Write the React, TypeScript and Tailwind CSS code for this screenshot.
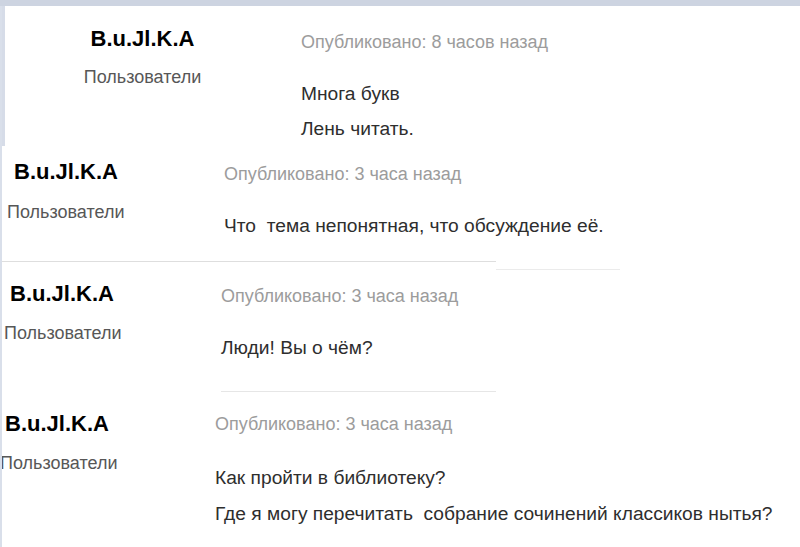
const font = { fontFamily: '"Liberation Sans", Arial, sans-serif' };

const Name = ({ className = "" }: { className?: string }) => (
  <div className={`text-[22px] leading-[24px] font-bold text-black whitespace-nowrap ${className}`}>B.u.Jl.K.A</div>
);

const Role = ({ className = "" }: { className?: string }) => (
  <div className={`text-[18px] leading-[24px] text-[#575757] whitespace-nowrap ${className}`}>Пользователи</div>
);

const Meta = ({ when, className = "" }: { when: string; className?: string }) => (
  <div className={`text-[18px] leading-[24px] text-[#9c9c9c] whitespace-nowrap ${className}`}>
    Опубликовано: {when}
  </div>
);

const Body = ({ lines, className = "" }: { lines: string[]; className?: string }) => (
  <div className={`text-[19.2px] text-[#2e2e2e] whitespace-pre ${className}`}>
    {lines.map((l) => (
      <div key={l}>{l}</div>
    ))}
  </div>
);

export default function App() {
  return (
    <div className="w-[800px] h-[547px] overflow-hidden bg-[#d9dfea] pl-[2px]" style={font}>
      <div className="h-[6px] -ml-[2px] bg-[#cdd4e1]" />
      <div className="bg-white h-[541px] overflow-hidden">
        {/* post 1 */}
        <div className="flex h-[140px] border-l-[3px] border-[#d6dce8]">
          <div className="w-[275px] shrink-0 flex flex-col items-center pt-[21px]">
            <Name />
            <Role className="mt-[14px]" />
          </div>
          <div className="ml-[21px] pt-[24px]">
            <Meta when="8 часов назад" />
            <Body className="mt-[22px] leading-[35px]" lines={["Многа букв", "Лень читать."]} />
          </div>
        </div>

        {/* post 2 */}
        <div className="flex h-[116px] w-[494px] border-b border-[#dedede]">
          <div className="w-[222px] shrink-0 pt-[14px]">
            <Name className="pl-[12px]" />
            <Role className="mt-[16px] pl-[5px]" />
          </div>
          <div className="pt-[16px]">
            <Meta when="3 часа назад" />
            <Body className="mt-[22px] leading-[35px]" lines={["Что  тема непонятная, что обсуждение её."]} />
          </div>
        </div>

        {/* post 3 */}
        <div>
          <div className="h-[8px] ml-[494px] w-[124px] border-b border-[#ebebeb]" />
          <div className="flex">
            <div className="w-[219px] shrink-0 pt-[12px]">
              <Name className="pl-[8px]" />
              <Role className="mt-[15px] pl-[2px]" />
            </div>
            <div className="w-[275px] h-[122px] pt-[14px] border-b border-[#e6e6e6]">
              <Meta when="3 часа назад" />
              <Body className="mt-[22px] leading-[35px]" lines={["Люди! Вы о чём?"]} />
            </div>
          </div>
        </div>

        {/* post 4 */}
        <div className="flex">
          <div className="w-[213px] shrink-0 pt-[20px]">
            <Name className="pl-[3px]" />
            <Role className="mt-[15px] -ml-[2px]" />
          </div>
          <div className="pt-[20px]">
            <Meta when="3 часа назад" />
            <Body
              className="mt-[24px] leading-[36px]"
              lines={["Как пройти в библиотеку?", "Где я могу перечитать  собрание сочинений классиков нытья?"]}
            />
          </div>
        </div>
      </div>
    </div>
  );
}
